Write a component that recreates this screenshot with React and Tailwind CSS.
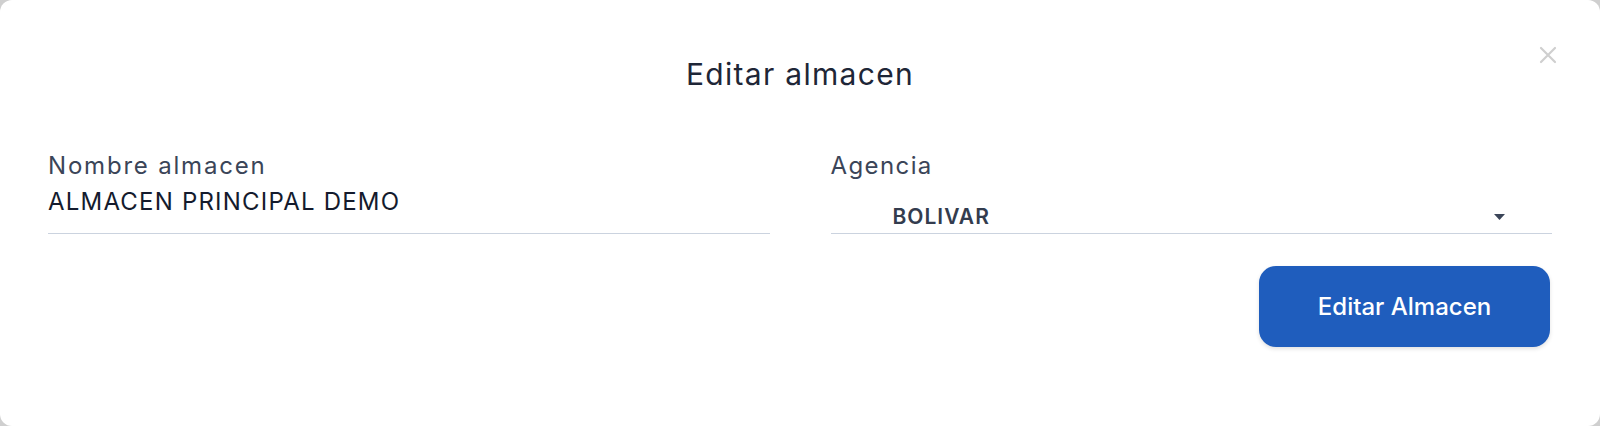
import React from "react";

export default function App() {
  return (
    <div className="h-[426px] w-[1600px] bg-[#cfcfcf]" style={{ fontFamily: "Inter, 'Noto Sans', sans-serif" }}>
      <div className="relative h-full w-full rounded-[12px] bg-white px-[48px]">
        {/* Close */}
        <button className="absolute right-[43px] top-[46px] text-[#cfcfcf]">
          <svg width="18" height="18" viewBox="0 0 18 18" fill="none" stroke="currentColor" strokeWidth="2.2" strokeLinecap="round">
            <path d="M2 2L16 16M16 2L2 16" />
          </svg>
        </button>

        <h2 className="pt-[56px] text-center text-[30px] leading-[36px] tracking-[1.3px] text-[#1e2637]">
          Editar almacen
        </h2>

        <div className="mt-[60px] grid grid-cols-2 gap-[61px]">
          {/* Nombre */}
          <div className="border-b border-[#cbd3df] pb-[17px]">
            <div className="text-[24px] leading-[28px] tracking-[1.8px] text-[#3b4558]">Nombre almacen</div>
            <div className="mt-[8px] text-[24px] leading-[28px] tracking-[1.2px] text-[#141b2d]">ALMACEN PRINCIPAL DEMO</div>
          </div>

          {/* Agencia */}
          <div className="border-b border-[#cbd3df] pb-[2px]">
            <div className="text-[24px] leading-[28px] tracking-[1.4px] text-[#3b4558]">Agencia</div>
            <div className="mt-[23px] flex items-center justify-between pl-[62px] pr-[47px]">
              <span className="text-[21px] font-semibold leading-[28px] tracking-[1px] text-[#333c4e]">BOLIVAR</span>
              <svg width="11" height="6" viewBox="0 0 11 6" className="text-[#3b4558]">
                <path d="M0 0H11L5.5 6Z" fill="currentColor" />
              </svg>
            </div>
          </div>
        </div>

        <div className="mt-[32px] flex justify-end pr-[2px]">
          <button className="h-[81px] w-[291px] rounded-[17px] bg-[#1f5dbd] text-[24px] font-medium text-white shadow-[0_2px_4px_rgba(0,0,0,0.12)]">
            Editar Almacen
          </button>
        </div>
      </div>
    </div>
  );
}
